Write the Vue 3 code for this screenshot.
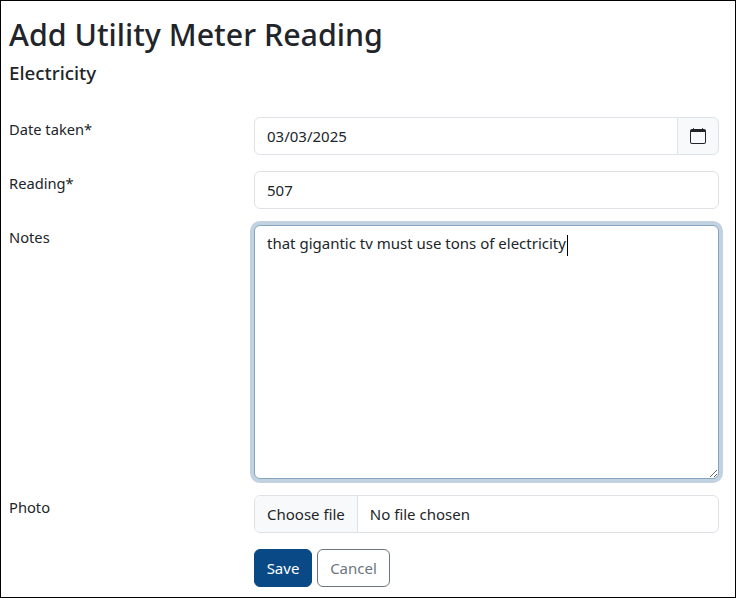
<template>
  <div class="page">
    <h2 class="title">Add Utility Meter Reading</h2>
    <h5 class="subtitle">Electricity</h5>

    <form class="form" @submit.prevent>
      <label class="label">Date taken*</label>
      <div class="input-group">
        <input v-model="dateTaken" class="control joined" type="text">
        <button type="button" class="cal-btn" aria-label="Pick a date">
          <svg width="16" height="16" viewBox="0 0 16 16" fill="#212529">
            <path d="M3.5 0a.5.5 0 0 1 .5.5V1h8V.5a.5.5 0 0 1 1 0V1h1a2 2 0 0 1 2 2v11a2 2 0 0 1-2 2H2a2 2 0 0 1-2-2V3a2 2 0 0 1 2-2h1V.5a.5.5 0 0 1 .5-.5zM1 4v10a1 1 0 0 0 1 1h12a1 1 0 0 0 1-1V4H1z" />
          </svg>
        </button>
      </div>

      <label class="label">Reading*</label>
      <input v-model="reading" class="control" type="text">

      <label class="label">Notes</label>
      <div class="notes-wrap">
        <textarea v-model="notes" class="control notes"></textarea>
        <span class="caret"></span>
      </div>

      <label class="label">Photo</label>
      <div class="file-field">
        <span class="file-btn">Choose file</span>
        <span class="file-name">No file chosen</span>
      </div>

      <div class="actions">
        <button type="submit" class="btn save">Save</button>
        <button type="button" class="btn cancel">Cancel</button>
      </div>
    </form>
  </div>
</template>

<script setup>
import { ref } from 'vue'

const dateTaken = ref('03/03/2025')
const reading = ref('507')
const notes = ref('that gigantic tv must use tons of electricity')
</script>

<style scoped>
.page {
    box-sizing: border-box;
    width: 736px;
    height: 598px;
    border: 1px solid #000;
    padding: 0 16px 0 8px;
    overflow: hidden;
    background: #fff;
    color: #212529;
    font-family: "Noto Sans", "Open Sans", sans-serif;
    font-size: 15px;
}

.title {
    margin: 15px 0 0;
    font-size: 30.4px;
    font-weight: 500;
    line-height: 38px;
}

.subtitle {
    margin: 7px 0 0;
    font-size: 18.8px;
    font-weight: 500;
    line-height: 24px;
}

.form {
    display: grid;
    grid-template-columns: 245px 465px;
    row-gap: 16px;
    margin-top: 32px;
}

.label {
    font-size: 14.7px;
    line-height: 24px;
}

.control {
    box-sizing: border-box;
    width: 100%;
    height: 38px;
    padding: 6px 12px;
    border: 1px solid #dee2e6;
    border-radius: 6px;
    background: #fff;
    color: #212529;
    font: inherit;
    outline: none;
    display: block;
}

.input-group {
    display: flex;
}

.joined {
    border-radius: 6px 0 0 6px;
    flex: 1;
    min-width: 0;
}

.cal-btn {
    width: 42px;
    height: 38px;
    margin-left: -1px;
    padding: 0;
    border: 1px solid #dee2e6;
    border-radius: 0 6px 6px 0;
    background: #f8f9fa;
    display: flex;
    align-items: center;
    justify-content: center;
}

.notes-wrap {
    position: relative;
    height: 254px;
}

.notes {
    height: 254px;
    border-color: #86a5c2;
    box-shadow: 0 0 0 4px rgba(10, 75, 135, 0.25);
    line-height: 22px;
    resize: vertical;
}

.caret {
    position: absolute;
    left: 313px;
    top: 10px;
    width: 1px;
    height: 21px;
    background: #000;
}

.file-field {
    box-sizing: border-box;
    display: flex;
    align-items: stretch;
    height: 38px;
    border: 1px solid #dee2e6;
    border-radius: 6px;
    overflow: hidden;
    line-height: 36px;
}

.file-btn {
    padding: 0 12px;
    background: #f8f9fa;
    border-right: 1px solid #dee2e6;
}

.file-name {
    padding-left: 12px;
}

.actions {
    grid-column: 2;
    display: flex;
    gap: 5px;
}

.btn {
    box-sizing: border-box;
    height: 38px;
    padding: 0;
    border: 1px solid;
    border-radius: 6px;
    font: inherit;
}

.save {
    width: 58px;
    background: #094a86;
    border-color: #094a86;
    color: #fff;
}

.cancel {
    width: 73px;
    background: #fff;
    border-color: #6c757d;
    color: #6c757d;
}
</style>

<style>
body {
    margin: 0;
}
</style>
